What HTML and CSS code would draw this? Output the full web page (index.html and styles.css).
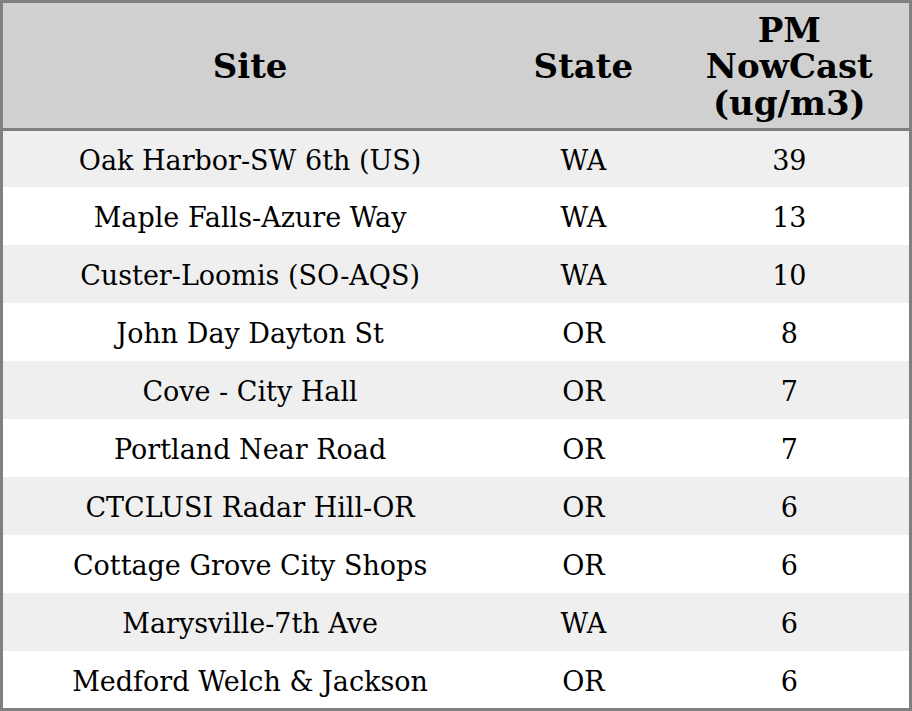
FILE: index.html
```html
<!DOCTYPE html>
<html>
<head>
<meta charset="utf-8">
<link rel="stylesheet" href="styles.css">
</head>
<body>
<table class="aq">
  <colgroup>
    <col class="c-site">
    <col class="c-state">
    <col class="c-pm">
  </colgroup>
  <thead>
    <tr><th>Site</th><th>State</th><th>PM<br>NowCast<br>(ug/m3)</th></tr>
  </thead>
  <tbody>
    <tr><td>Oak Harbor-SW 6th (US)</td><td>WA</td><td>39</td></tr>
    <tr><td>Maple Falls-Azure Way</td><td>WA</td><td>13</td></tr>
    <tr><td>Custer-Loomis (SO-AQS)</td><td>WA</td><td>10</td></tr>
    <tr><td>John Day Dayton St</td><td>OR</td><td>8</td></tr>
    <tr><td>Cove - City Hall</td><td>OR</td><td>7</td></tr>
    <tr><td>Portland Near Road</td><td>OR</td><td>7</td></tr>
    <tr><td>CTCLUSI Radar Hill-OR</td><td>OR</td><td>6</td></tr>
    <tr><td>Cottage Grove City Shops</td><td>OR</td><td>6</td></tr>
    <tr><td>Marysville-7th Ave</td><td>WA</td><td>6</td></tr>
    <tr><td>Medford Welch &amp; Jackson</td><td>OR</td><td>6</td></tr>
  </tbody>
</table>
</body>
</html>
```
FILE: styles.css
```css
html, body {
  margin: 0;
  padding: 0;
  background: #ffffff;
}
.aq {
  width: 912px;
  border-collapse: collapse;
  border: 3px solid #808080;
  font-family: "DejaVu Serif", serif;
  color: #000;
  table-layout: fixed;
}
.c-site { width: 494px; }
.c-state { width: 172px; }
.c-pm { width: 240px; }
.aq th {
  background: #d0d0d0;
  font-weight: bold;
  font-size: 34px;
  line-height: 36.5px;
  height: 123px;
  padding: 2px 0 0 0;
  text-align: center;
  vertical-align: middle;
  border-bottom: 3px solid #808080;
}
.aq td {
  font-size: 27px;
  line-height: 32px;
  height: 54px;
  padding: 4px 0 0 0;
  text-align: center;
  vertical-align: middle;
}
.aq tbody tr:first-child td { height: 52px; }
.aq tbody tr:last-child td { height: 53px; }
.aq tbody tr:nth-child(odd) td { background: #efefef; }
.aq tbody tr:nth-child(even) td { background: #ffffff; }
```
